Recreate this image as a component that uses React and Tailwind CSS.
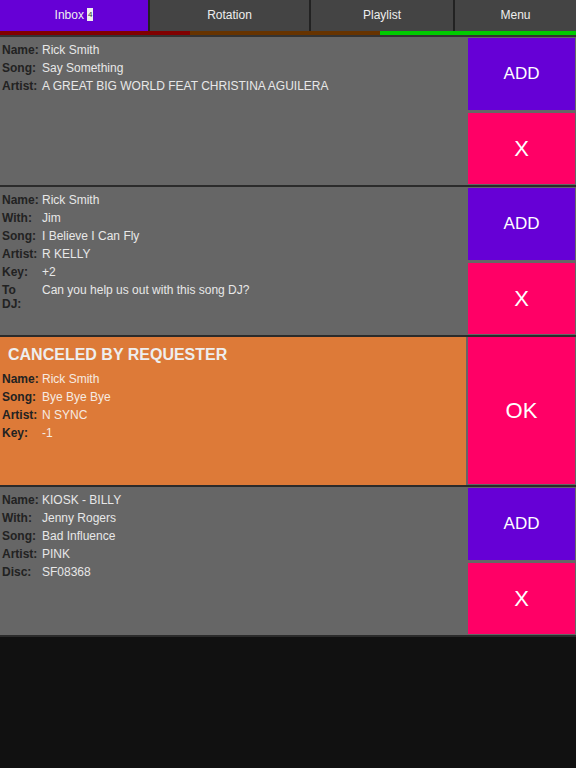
import React from 'react';

const font = { fontFamily: '"Liberation Sans", Arial, sans-serif' };

const tabs = [
  { label: 'Inbox', w: 'w-[148px]', active: true, badge: 4 },
  { label: 'Rotation', w: 'w-[159px]' },
  { label: 'Playlist', w: 'w-[142px]' },
  { label: 'Menu', w: 'flex-1' },
];

const requests = [
  {
    id: 1,
    rows: [
      ['Name:', 'Rick Smith'],
      ['Song:', 'Say Something'],
      ['Artist:', 'A GREAT BIG WORLD FEAT CHRISTINA AGUILERA'],
    ],
  },
  {
    id: 2,
    rows: [
      ['Name:', 'Rick Smith'],
      ['With:', 'Jim'],
      ['Song:', 'I Believe I Can Fly'],
      ['Artist:', 'R KELLY'],
      ['Key:', '+2'],
      ['To\nDJ:', 'Can you help us out with this song DJ?'],
    ],
  },
  {
    id: 3,
    canceled: true,
    rows: [
      ['Name:', 'Rick Smith'],
      ['Song:', 'Bye Bye Bye'],
      ['Artist:', 'N SYNC'],
      ['Key:', '-1'],
    ],
  },
  {
    id: 4,
    rows: [
      ['Name:', 'KIOSK - BILLY'],
      ['With:', 'Jenny Rogers'],
      ['Song:', 'Bad Influence'],
      ['Artist:', 'PINK'],
      ['Disc:', 'SF08368'],
    ],
  },
];

// label / value pairs, label column is narrow so "To DJ:" sits on two lines
const Rows = ({ rows, valueColor }) => (
  <div className="grid grid-cols-[40px_1fr] text-[12px] leading-[14px]">
    {rows.map(([label, value]) => (
      <React.Fragment key={label}>
        <div className="py-[2px] font-bold text-[#222] whitespace-pre-line">{label}</div>
        <div className={`py-[2px] ${valueColor}`}>{value}</div>
      </React.Fragment>
    ))}
  </div>
);

const RequestCard = ({ req }) => {
  if (req.canceled) {
    return (
      <div className="flex h-[150px] bg-[#666] border-b-2 border-[#2b2b2b]">
        <div className="flex-1 bg-[#dd7a38] pl-[2px] pt-[7px]">
          <div className="pl-[6px] text-[16px] leading-[22px] font-bold text-[#eee] mb-[4px]">
            CANCELED BY REQUESTER
          </div>
          <Rows rows={req.rows} valueColor="text-[#f6ebe2]" />
        </div>
        <div className="w-[107px] ml-[2px] mr-[1px] pb-[1px] flex">
          <button className="flex-1 bg-[#ff0066] text-white text-[22px]">OK</button>
        </div>
      </div>
    );
  }
  return (
    <div className="flex h-[150px] bg-[#666] border-b-2 border-[#2b2b2b]">
      <div className="flex-1 pl-[2px] pt-[4px]">
        <Rows rows={req.rows} valueColor="text-[#e8e8e8]" />
      </div>
      <div className="w-[107px] ml-[2px] mr-[1px] py-[1px] flex flex-col gap-[3px]">
        <button className="flex-1 bg-[#6600d6] text-white text-[17px]">ADD</button>
        <button className="flex-1 bg-[#ff0066] text-white text-[22px]">X</button>
      </div>
    </div>
  );
};

export default function App() {
  return (
    <div className="w-[576px] h-[768px] bg-[#111] flex flex-col overflow-hidden" style={font}>
      {/* Tab bar */}
      <div className="flex h-[31px] bg-[#222] gap-[2px]">
        {tabs.map(t => (
          <div
            key={t.label}
            className={`${t.w} flex items-center justify-center pb-[2px] text-[12px] text-[#eee] ${
              t.active ? 'bg-[#6600d6]' : 'bg-[#444]'
            }`}
          >
            {t.label}
            {t.badge && (
              <span className="ml-[3px] bg-[#eee] text-[#333] text-[8px] leading-[13px] px-[1px]">
                {t.badge}
              </span>
            )}
          </div>
        ))}
      </div>

      {/* Status stripe */}
      <div className="flex h-[4px]">
        <div className="w-[190px] bg-[#800000]" />
        <div className="w-[190px] bg-[#663300]" />
        <div className="flex-1 bg-[#00cc00]" />
      </div>
      <div className="h-[2px] bg-[#333]" />

      {/* Request list */}
      <div className="flex flex-col">
        {requests.map(r => (
          <RequestCard key={r.id} req={r} />
        ))}
      </div>
    </div>
  );
}
